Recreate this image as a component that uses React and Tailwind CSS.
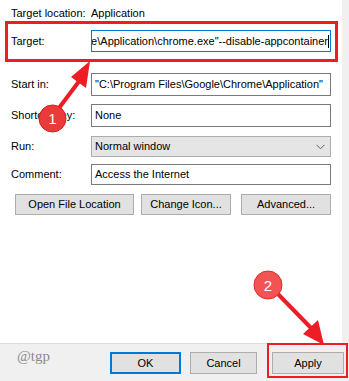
import React from "react";

function Row({ label, children, className = "" }) {
  return (
    <div className={"flex items-center " + className}>
      <div className="w-[80px] shrink-0">{label}</div>
      {children}
    </div>
  );
}

function TextBox({ children, className = "" }) {
  return (
    <div className={"w-[240px] h-full border border-[#7a7a7a] bg-white flex items-center px-[3px] whitespace-nowrap overflow-hidden " + className}>
      {children}
    </div>
  );
}

function Btn({ children, className = "" }) {
  return (
    <div className={"h-[21px] bg-[#e1e1e1] border border-[#adadad] flex items-center justify-center " + className}>
      {children}
    </div>
  );
}

export default function App() {
  return (
    <div className="relative w-[349px] h-[381px] overflow-hidden bg-[#f0f0f0] text-[11px] leading-none text-black font-['Liberation_Sans',Arial,sans-serif]">
      <div className="flex h-[343px]">
        <div className="w-[342px] bg-white pl-[11px] flex flex-col">
          <Row label="Target location:" className="mt-[6px] h-[14px]">
            <span>Application</span>
          </Row>
          <Row label="Target:" className="mt-[10px] h-[22px]">
            <div className="w-[240px] h-full border border-[#0078d7] bg-white flex items-center justify-end pr-[1px] whitespace-nowrap overflow-hidden">
              <span>"C:\Program Files\Google\Chrome\Application\chrome.exe"--disable-appcontainer</span>
              <span className="w-px h-[13px] bg-black shrink-0" />
            </div>
          </Row>
          <Row label="Start in:" className="mt-[21px] h-[23px]">
            <TextBox>"C:\Program Files\Google\Chrome\Application"</TextBox>
          </Row>
          <Row label="Shortcut key:" className="mt-[8px] h-[23px]">
            <TextBox>None</TextBox>
          </Row>
          <Row label="Run:" className="mt-[9px] h-[21px]">
            <div className="w-[240px] h-full border border-[#acacac] bg-[#e5e5e5] flex items-center justify-between pl-[3px] pr-[5px]">
              <span>Normal window</span>
              <svg width="9" height="6" viewBox="0 0 9 6">
                <path d="M0.5 0.8 L4.5 4.8 L8.5 0.8" fill="none" stroke="#606060" strokeWidth="1" />
              </svg>
            </div>
          </Row>
          <Row label="Comment:" className="mt-[7px] h-[21px]">
            <TextBox>Access the Internet</TextBox>
          </Row>
          <div className="mt-[9px] ml-[4px] flex">
            <Btn className="w-[119px]">Open File Location</Btn>
            <Btn className="w-[90px] ml-[7px]">Change Icon...</Btn>
            <Btn className="w-[90px] ml-[10px]">Advanced...</Btn>
          </div>
        </div>
        <div className="flex-1 bg-[#f0f0f0]" />
      </div>
      <div className="h-[38px] border-t border-[#dcdcdc] bg-[#f0f0f0] flex items-start pt-[8px]">
        <div className="w-[110px] pl-[17px] -mt-[3px] text-[15px] text-[#8c8c8c] font-['Liberation_Serif',serif]">@tgp</div>
        <div className="w-[71px] h-[22px] border-2 border-[#0078d7] bg-[#e1e1e1] flex items-center justify-center">OK</div>
        <div className="w-[67px] h-[22px] ml-[9px] border border-[#adadad] bg-[#e1e1e1] flex items-center justify-center">Cancel</div>
        <div className="w-[72px] h-[22px] ml-[15px] border border-[#adadad] bg-[#e1e1e1] flex items-center justify-center">Apply</div>
      </div>

      {/* annotation overlays */}
      <div className="absolute left-[5px] top-[21px] w-[333px] h-[41px] border-[3px] border-[#ee1c24]" />
      <div className="absolute left-[267px] top-[343px] w-[81px] h-[35px] border-2 border-[#ee1c24]" />
      <svg className="absolute left-0 top-0" width="349" height="381" viewBox="0 0 349 381">
        <line x1="56" y1="112" x2="80" y2="80" stroke="#ee1c24" strokeWidth="4" />
        <polygon points="90,61 71,77 86,88" fill="#ee1c24" />
        <circle cx="52.5" cy="118.5" r="13.5" fill="#ea3a3a" stroke="#d81f1f" strokeWidth="1" />
        <line x1="276" y1="292" x2="312" y2="329" stroke="#ee1c24" strokeWidth="4" />
        <polygon points="324,345 303,334 318,320" fill="#ee1c24" />
        <circle cx="268" cy="285" r="14" fill="#f25454" stroke="#e02a2a" strokeWidth="1" />
      </svg>
      <div className="absolute left-[39px] top-[105px] w-[27px] h-[27px] flex items-center justify-center text-white text-[15px] font-['Liberation_Sans',sans-serif]">1</div>
      <div className="absolute left-[254px] top-[271px] w-[28px] h-[28px] flex items-center justify-center text-white text-[15px] font-['Liberation_Sans',sans-serif]">2</div>
    </div>
  );
}
